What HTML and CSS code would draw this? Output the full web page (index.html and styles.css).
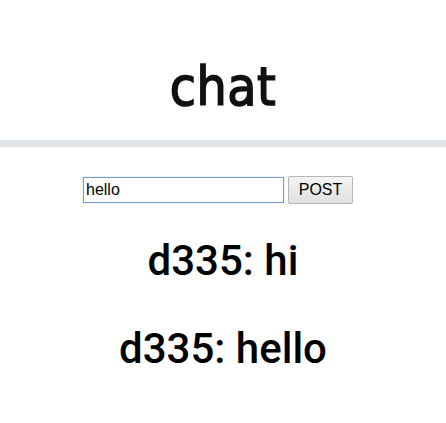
FILE: index.html
```html
<!DOCTYPE html>
<html>
<head>
<meta charset="utf-8">
<link rel="stylesheet" href="styles.css">
</head>
<body>
<header class="header">
  <h1 class="title">chat</h1>
</header>
<div class="divider"></div>
<main class="main">
  <form class="form">
    <input class="input" type="text" value="hello">
    <button class="btn" type="button">POST</button>
  </form>
  <ul class="messages">
    <li class="msg">d335: hi</li>
    <li class="msg">d335: hello</li>
  </ul>
</main>
</body>
</html>
```
FILE: styles.css
```css
html, body { margin: 0; padding: 0; background: #fff; }
body { font-family: "Roboto", sans-serif; color: #000; }
.header { height: 140px; display: flex; justify-content: center; align-items: flex-start; }
.title {
  margin: 47px 0 0 0;
  font-family: "DejaVu Sans Condensed", "DejaVu Sans", sans-serif;
  font-weight: normal;
  font-size: 53px;
  letter-spacing: 0.5px;
  line-height: 80px;
  color: #111;
  -webkit-text-stroke: 1.5px #111;
}
.divider { height: 7px; background: #dfe4e9; }
.main { display: flex; flex-direction: column; align-items: center; }
.form { margin-top: 29px; padding-right: 10px; display: flex; align-items: flex-start; gap: 4px; }
.input {
  width: 201px; height: 26px; box-sizing: border-box;
  border: 1px solid #6f9bd0; padding: 1px 2px; margin: 1px 0 0 0;
  box-shadow: 0 0 1px #9cc0e8;
  font-family: "Liberation Sans", Arial, sans-serif; font-size: 16px;
  outline: none; color: #000;
}
.btn {
  height: 28px; width: 65px; margin: 0; padding: 0;
  font-family: "Liberation Sans", Arial, sans-serif; font-size: 16px;
  background: linear-gradient(#f4f4f4, #e0e0e0);
  border: 1px solid #b5b5b5; border-radius: 2px; color: #000;
}
.messages { list-style: none; margin: 13px 0 0 0; padding: 0; text-align: center; }
.msg { font-size: 42px; line-height: 88px; font-weight: 500; }
```
